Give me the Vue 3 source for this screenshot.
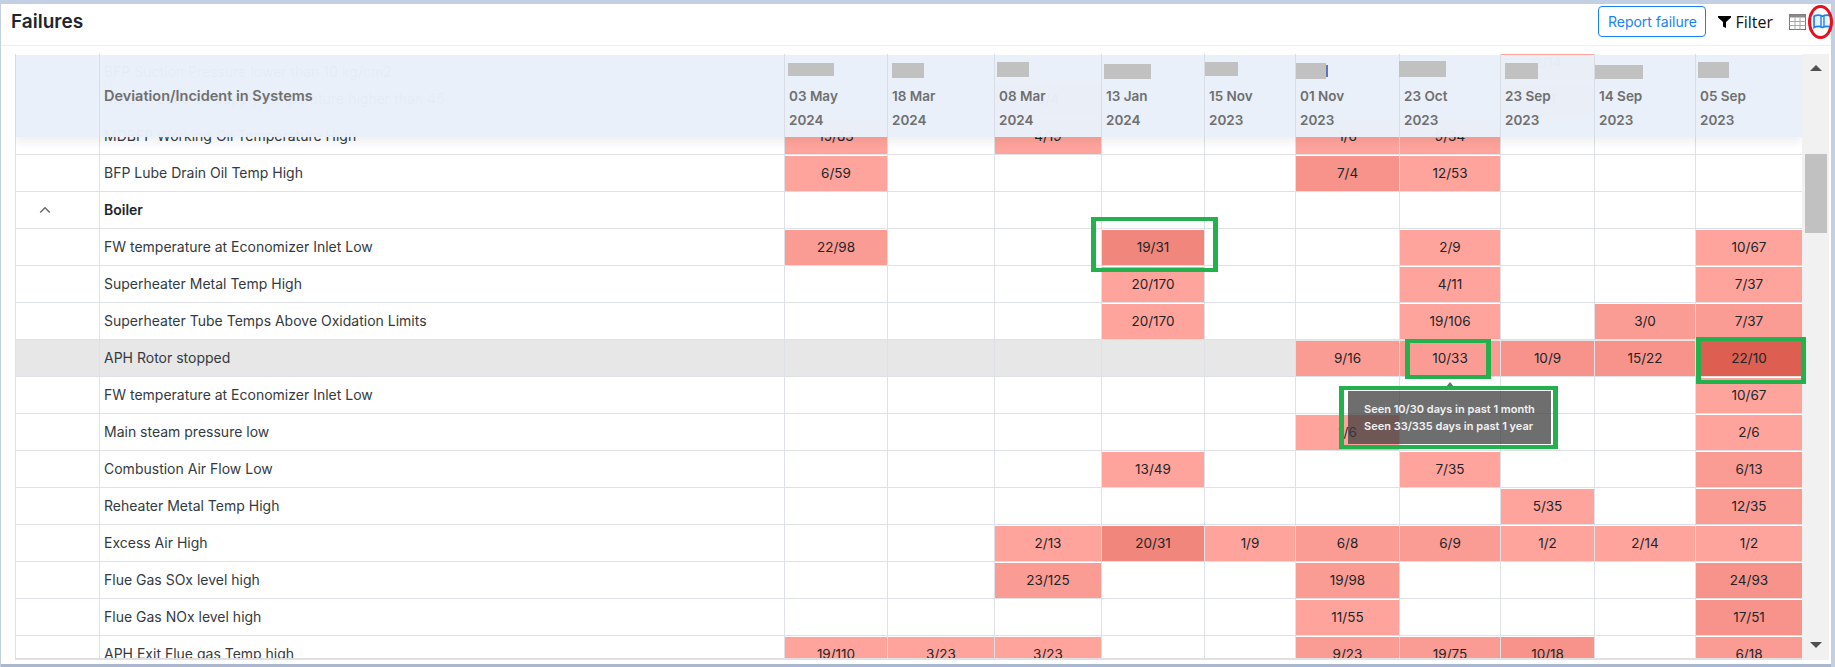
<script setup>
const dates = [
  { d: '03 May', y: '2024', r: [3, 9, 46, 13] },
  { d: '18 Mar', y: '2024', r: [4, 9, 32, 15] },
  { d: '08 Mar', y: '2024', r: [2, 8, 32, 15] },
  { d: '13 Jan', y: '2024', r: [2, 10, 47, 15] },
  { d: '15 Nov', y: '2023', r: [0, 8, 33, 14] },
  { d: '01 Nov', y: '2023', r: [0, 9, 30, 16], sliver: true },
  { d: '23 Oct', y: '2023', r: [-1, 7, 47, 16] },
  { d: '23 Sep', y: '2023', r: [4, 9, 33, 16] },
  { d: '14 Sep', y: '2023', r: [0, 11, 48, 14] },
  { d: '05 Sep', y: '2023', r: [2, 8, 31, 16] },
]

const rows = [
  { name: 'BFP Suction Pressure lower than 10 kg/cm2', low: true, c: { 7: ['2/14', 0] } },
  { name: 'MDBFP Lube Oil supply temperature higher than 45', c: { 2: ['3/4', 0], 7: ['1/1', 0] } },
  { name: 'MDBFP Working Oil Temperature High', c: { 0: ['15/83', 0], 2: ['4/19', 0], 5: ['1/6', 0], 6: ['9/34', 0] } },
  { name: 'BFP Lube Drain Oil Temp High', c: { 0: ['6/59', 0], 5: ['7/4', 2], 6: ['12/53', 0] } },
  { name: 'Boiler', group: true, c: {} },
  { name: 'FW temperature at Economizer Inlet Low', c: { 0: ['22/98', 1], 3: ['19/31', 3], 6: ['2/9', 0], 9: ['10/67', 0] } },
  { name: 'Superheater Metal Temp High', c: { 3: ['20/170', 0], 6: ['4/11', 0], 9: ['7/37', 0] } },
  { name: 'Superheater Tube Temps Above Oxidation Limits', c: { 3: ['20/170', 0], 6: ['19/106', 0], 8: ['3/0', 1], 9: ['7/37', 1] } },
  { name: 'APH Rotor stopped', hover: true, c: { 5: ['9/16', 1], 6: ['10/33', 1], 7: ['10/9', 2], 8: ['15/22', 2], 9: ['22/10', 4] } },
  { name: 'FW temperature at Economizer Inlet Low', c: { 9: ['10/67', 0] } },
  { name: 'Main steam pressure low', c: { 5: ['1/6', 0], 9: ['2/6', 0] } },
  { name: 'Combustion Air Flow Low', c: { 3: ['13/49', 0], 6: ['7/35', 0], 9: ['6/13', 1] } },
  { name: 'Reheater Metal Temp High', c: { 7: ['5/35', 0], 9: ['12/35', 1] } },
  { name: 'Excess Air High', c: { 2: ['2/13', 0], 3: ['20/31', 3], 4: ['1/9', 0], 5: ['6/8', 1], 6: ['6/9', 1], 7: ['1/2', 0], 8: ['2/14', 0], 9: ['1/2', 0] } },
  { name: 'Flue Gas SOx level high', c: { 2: ['23/125', 1], 5: ['19/98', 1], 9: ['24/93', 2] } },
  { name: 'Flue Gas NOx level high', c: { 5: ['11/55', 0], 9: ['17/51', 2] } },
  { name: 'APH Exit Flue gas Temp high', c: { 0: ['19/110', 0], 1: ['3/23', 0], 2: ['3/23', 0], 5: ['9/23', 1], 6: ['19/75', 1], 7: ['10/18', 2], 9: ['6/18', 1] } },
]

const redact = (r) => ({
  left: r[0] + 'px',
  top: r[1] + 'px',
  width: r[2] + 'px',
  height: r[3] + 'px',
})
</script>

<template>
  <div class="page">
    <div class="card">
      <header class="topbar">
        <h1 class="title">Failures</h1>
        <button class="report">Report failure</button>
        <div class="filter">
          <svg width="13" height="12" viewBox="0 0 13 12"><path d="M0 0H13V1.4L8 6V12L5 10.4V6L0 1.4Z" fill="#000" /></svg>
          <span>Filter</span>
        </div>
        <svg class="grid-icon" width="17" height="16" viewBox="0 0 17 16">
          <rect x="0.5" y="0.5" width="16" height="15" fill="#fff" stroke="#777" />
          <rect x="0.5" y="0.5" width="16" height="3" fill="#8a8a8a" />
          <path d="M6 3.5V15.5M11 3.5V15.5M0.5 7.5H16.5M0.5 11.5H16.5" stroke="#a8a8a8" fill="none" />
        </svg>
        <svg class="map-icon" width="19" height="15" viewBox="0 0 18 14" preserveAspectRatio="none">
          <path d="M1 2Q5 0 9 2Q13 0 17 2V12.6Q13 10.6 9 12.6Q5 10.6 1 12.6Z" fill="#eaf4ff" stroke="#1a82f7" stroke-width="1.6" />
          <path d="M7.6 1.6V12.4M10.4 1.6V12.4" stroke="#1a82f7" stroke-width="1.3" fill="none" />
        </svg>
      </header>

      <div class="table-wrap">
        <div class="table-area">
          <div class="rows">
            <div v-for="(row, i) in rows" :key="i" class="row" :class="{ hover: row.hover }">
              <div class="cell toggle">
                <svg v-if="row.group" width="12" height="8" viewBox="0 0 12 8"><path d="M1.2 6.6L6 1.8L10.8 6.6" fill="none" stroke="#666" stroke-width="1.4" /></svg>
              </div>
              <div class="cell name" :class="{ group: row.group, low: row.low }">{{ row.name }}</div>
              <div v-for="(date, j) in dates" :key="j" class="cell value">
                <div v-if="row.c[j]" class="fill" :class="'lvl' + row.c[j][1]">{{ row.c[j][0] }}</div>
              </div>
            </div>
          </div>

          <div class="head">
            <div class="hcell"></div>
            <div class="hcell hname">Deviation/Incident in Systems</div>
            <div v-for="date in dates" :key="date.d + date.y" class="hcell">
              <span v-if="date.sliver" class="sliver"></span>
              <span class="redact" :style="redact(date.r)"></span>
              <div>{{ date.d }}</div>
              <div>{{ date.y }}</div>
            </div>
          </div>
        </div>

        <div class="scrollbar">
          <div class="arrow up"></div>
          <div class="thumb"></div>
          <div class="arrow down"></div>
        </div>
      </div>
    </div>

    <div class="tip-arrow"></div>
    <div class="tooltip">
      <div>Seen 10/30 days in past 1 month</div>
      <div>Seen 33/335 days in past 1 year</div>
    </div>

    <div class="mark box-a"></div>
    <div class="mark box-b"></div>
    <div class="mark box-c"></div>
    <div class="mark box-d"></div>
    <div class="circle"></div>
  </div>
</template>

<style>
html, body { margin: 0; background: #c3cfe2; }
</style>

<style scoped>
.page {
  position: relative;
  box-sizing: border-box;
  width: 1835px;
  height: 667px;
  padding: 4px 4px 0 1px;
  background: #c3cfe2;
  font-family: Inter, "Liberation Sans", sans-serif;
  color: #212529;
  overflow: hidden;
}
.card {
  height: 660px;
  background: #fff;
  box-shadow: 0 3px 0 #a9b8d0;
}
.topbar {
  box-sizing: border-box;
  display: flex;
  align-items: center;
  height: 42px;
  padding: 0 0 6px 10px;
  border-bottom: 1px solid #eeeeee;
}
.title {
  margin: 0 auto 0 0;
  font-size: 19px;
  font-weight: 600;
  color: #212529;
}
.report {
  box-sizing: border-box;
  width: 108px;
  height: 31px;
  padding: 0;
  background: #fff;
  border: 1px solid #1a82f7;
  border-radius: 4px;
  color: #1a82f7;
  font: 400 14px Inter, sans-serif;
}
.filter {
  display: flex;
  align-items: center;
  gap: 4px;
  margin-left: 12px;
  font: 400 16px "Open Sans", sans-serif;
  color: #111;
}
.grid-icon { margin-left: 16px; }
.map-icon { margin-left: 7px; margin-right: -1px; }

.table-wrap {
  display: flex;
  margin: 8px 0 0 14px;
  width: 1814px;
}
.table-area {
  position: relative;
  box-sizing: border-box;
  width: 1787px;
  height: 606px;
  border-bottom: 2px solid #e0e0e0;
  overflow: hidden;
}
.rows { margin-top: -10px; }
.row, .head {
  display: grid;
  grid-template-columns: 84px 685px 103px 107px 107px 103px 91px 104px 101px 94px 101px 107px;
}
.row {
  box-sizing: border-box;
  height: 37px;
  border-bottom: 1px solid #dee2e6;
}
.row.hover { background: #e7e7e7; }
.cell {
  box-sizing: border-box;
  border-left: 1px solid #dee2e6;
  min-width: 0;
}
.toggle {
  display: flex;
  align-items: center;
  justify-content: center;
  padding-right: 26px;
}
.name {
  display: flex;
  align-items: center;
  padding: 0 0 1px 4px;
  font-size: 14px;
  color: #343a40;
}
.name.group { font-weight: 600; color: #212529; }
.name.low { padding-top: 19px; }
.value { padding-top: 1px; }
.fill {
  box-sizing: border-box;
  display: flex;
  align-items: center;
  justify-content: center;
  height: 35px;
  padding-bottom: 1px;
  font-size: 13.5px;
}
.lvl0 { background: #ffa49c; }
.lvl1 { background: #fb9c94; }
.lvl2 { background: #f7938a; }
.lvl3 { background: #f0867c; }
.lvl4 { background: #dc5f52; }

.head {
  position: absolute;
  top: 1px;
  left: 0;
  height: 82px;
  background: rgba(233, 240, 249, 0.975);
  box-shadow: 0 6px 8px rgba(0, 0, 0, 0.06);
}
.hcell {
  position: relative;
  box-sizing: border-box;
  margin-top: -1px;
  padding: 30px 0 0 4px;
  border-left: 1px solid #d9dde5;
  font-size: 13.5px;
  font-weight: 600;
  line-height: 24px;
  color: #6f6f6f;
}
.hcell.hname { font-size: 14.5px; }
.redact {
  position: absolute;
  background: #c1c1c1;
}
.sliver {
  position: absolute;
  left: 30px;
  top: 11px;
  width: 2px;
  height: 12px;
  background: #5a78b8;
}

.scrollbar {
  display: flex;
  flex-direction: column;
  align-items: center;
  width: 27px;
  height: 606px;
  background: #f1f1f1;
}
.arrow {
  width: 0;
  height: 0;
  border-left: 6px solid transparent;
  border-right: 6px solid transparent;
}
.arrow.up {
  margin-top: 11px;
  margin-bottom: 83px;
  border-bottom: 6px solid #505050;
}
.thumb {
  width: 22px;
  height: 79px;
  background: #c1c1c1;
}
.arrow.down {
  margin-top: auto;
  margin-bottom: 12px;
  border-top: 6px solid #505050;
}

.tooltip {
  position: absolute;
  left: 1348px;
  top: 391px;
  box-sizing: border-box;
  width: 203px;
  height: 53px;
  padding: 10px 0 0 16px;
  background: rgba(62, 62, 62, 0.75);
  color: #f2f2f2;
  font-size: 11px;
  font-weight: 600;
  line-height: 17px;
}
.tip-arrow {
  position: absolute;
  left: 1446px;
  top: 382px;
  width: 0;
  height: 0;
  border-left: 4px solid transparent;
  border-right: 4px solid transparent;
  border-bottom: 5px solid #6e6e6e;
}
.mark {
  position: absolute;
  box-sizing: border-box;
  border: 4px solid #22b14c;
  border-left-width: 5px;
  border-right-width: 5px;
}
.box-a { left: 1091px; top: 217px; width: 127px; height: 55px; }
.box-b { left: 1405px; top: 339px; width: 86px; height: 40px; }
.box-c { left: 1696px; top: 337px; width: 110px; height: 47px; }
.box-d { left: 1339px; top: 386px; width: 219px; height: 63px; }
.circle {
  position: absolute;
  left: 1808px;
  top: 5px;
  box-sizing: border-box;
  width: 25px;
  height: 34px;
  border: 3.5px solid #e8101e;
  border-radius: 50%;
}
</style>
